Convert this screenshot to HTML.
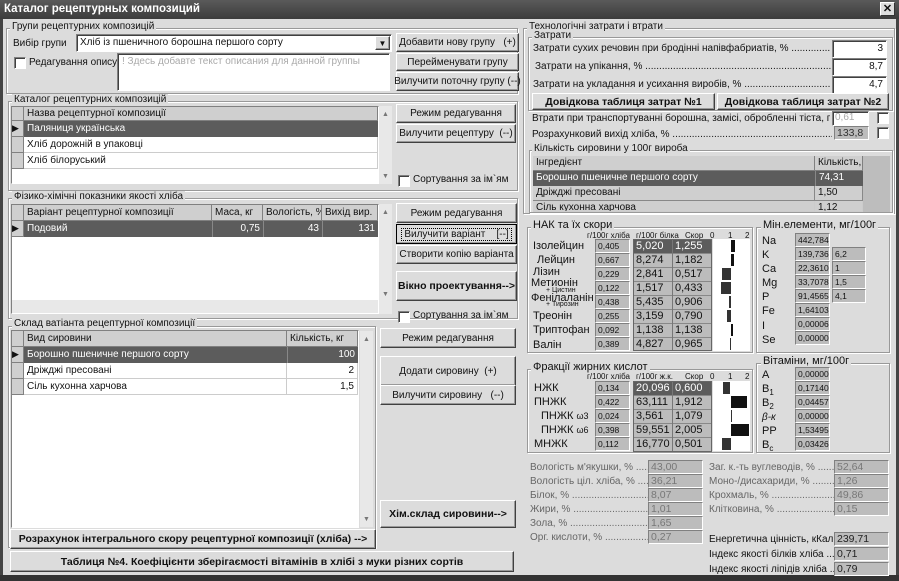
<!DOCTYPE html>
<html><head><meta charset="utf-8"><style>
*{box-sizing:border-box;margin:0;padding:0}
body{width:899px;height:581px;overflow:hidden;background:#dcdcdc;font-family:"Liberation Sans",sans-serif;font-size:10px;color:#111;position:relative}
div{position:absolute}
.t{white-space:nowrap;line-height:13px}
.b{background:#dcdcdc;border:1px solid;border-color:#fff #404040 #404040 #fff;box-shadow:inset -1px -1px 0 #999;text-align:center;white-space:nowrap;display:flex;align-items:center;justify-content:center}
.bold{font-weight:bold;font-size:10.5px}
.g{border:1px solid #999;box-shadow:1px 1px 0 #fff, inset 1px 1px 0 #fff}
.gl{background:#dcdcdc;padding:0 2px;white-space:nowrap;line-height:12px}
.in{background:#fff;border:1px solid;border-color:#808080 #fff #fff #808080;box-shadow:inset 1px 1px 0 #404040;text-align:right;padding-right:3px;line-height:15px}
.o{background:#bcbcbc;border:1px solid;border-color:#808080 #fff #fff #808080;font-size:8.5px;padding-left:2px;line-height:12px;white-space:nowrap}
.o2{background:#bcbcbc;border:1px solid;border-color:#808080 #fff #fff #808080;padding-left:2px;line-height:12px;color:#777;white-space:nowrap;font-size:10.5px}
.cb{width:12px;height:12px;background:#fff;border:1px solid;border-color:#808080 #fff #fff #808080;box-shadow:inset 1px 1px 0 #404040}
.grid{background:#fff;border:1px solid;border-color:#808080 #fff #fff #808080}
.h{background:#cfcfcf;border-right:1px solid #808080;border-bottom:1px solid #808080;line-height:15px;padding-left:3px;white-space:nowrap;overflow:hidden}
.ind{background:#cfcfcf;border-right:1px solid #808080;border-bottom:1px solid #808080}
.sel{background:#5c5c5c;color:#fff;line-height:15px;padding-left:3px;white-space:nowrap}
.r{line-height:15px;padding-left:3px;border-bottom:1px solid #ccc;border-right:1px solid #ccc;white-space:nowrap}
.sb{background:#e8e8e8}
.dots{overflow:hidden;white-space:nowrap}
.n{font-size:11px}
.sh{font-size:8px;white-space:nowrap;line-height:10px}
.ar{font-size:7px;color:#777;line-height:9px}
</style></head><body>
<div style="left:0;top:0;width:899px;height:19px;background:linear-gradient(#5a5a5a,#3c3c3c)"></div>
<div class="t" style="left:4px;top:3px;color:#fff;font-weight:bold;font-size:11.5px">Каталог рецептурных композиций</div>
<div style="left:880px;top:2px;width:15px;height:14px;background:#ddd;border:1px solid #fff;border-right-color:#333;border-bottom-color:#333;font-size:11px;line-height:12px;text-align:center;font-weight:bold">✕</div>
<div style="left:0;top:19px;width:3px;height:562px;background:#444"></div>
<div style="left:896px;top:19px;width:3px;height:562px;background:#444"></div>
<div style="left:0;top:575px;width:899px;height:6px;background:#333"></div>

<div class="g" style="left:6px;top:28px;width:512px;height:66px"></div>
<div class="gl t" style="left:10px;top:21px">Групи рецептурних композицій</div>
<div class="t" style="left:13px;top:37px">Вибір групи</div>
<div class="in" style="left:76px;top:34px;width:316px;height:18px;text-align:left;padding-left:3px">Хліб із пшеничного борошна першого сорту</div>
<div class="b" style="left:375px;top:36px;width:15px;height:14px;font-size:8px">▼</div>
<div class="b" style="left:396px;top:33px;width:123px;height:19px">Добавити нову групу&nbsp;&nbsp;&nbsp;(+)</div>
<div class="b" style="left:396px;top:53px;width:123px;height:18px">Перейменувати групу</div>
<div class="b" style="left:396px;top:72px;width:123px;height:19px">Вилучити поточну групу (--)</div>
<div class="cb" style="left:14px;top:57px"></div>
<div class="t" style="left:29px;top:56px">Редагування опису</div>
<div class="in" style="left:117px;top:53px;width:273px;height:38px;text-align:left;color:#aaa;padding-left:4px">! Здесь добавте текст описания для данной группы</div>

<div class="g" style="left:8px;top:101px;width:510px;height:90px"></div>
<div class="gl t" style="left:12px;top:94px">Каталог рецептурних композицій</div>
<div class="grid" style="left:11px;top:106px;width:368px;height:78px"></div>
<div class="ind" style="left:12px;top:107px;width:12px;height:14px"></div>
<div class="h" style="left:24px;top:107px;width:354px;height:14px;line-height:13px">Назва рецептурної композиції</div>
<div class="ind" style="left:12px;top:121px;width:12px;height:16px;font-size:9px;line-height:15px">▶</div>
<div class="sel" style="left:24px;top:121px;width:354px;height:16px">Паляниця українська</div>
<div class="ind" style="left:12px;top:137px;width:12px;height:16px"></div>
<div class="r" style="left:24px;top:137px;width:354px;height:16px">Хліб дорожній в упаковці</div>
<div class="ind" style="left:12px;top:153px;width:12px;height:16px"></div>
<div class="r" style="left:24px;top:153px;width:354px;height:16px">Хліб білоруський</div>
<div class="sb" style="left:379px;top:106px;width:13px;height:78px"></div>
<div class="ar" style="left:382px;top:110px">▲</div>
<div class="ar" style="left:382px;top:172px">▼</div>
<div class="b" style="left:396px;top:104px;width:120px;height:19px">Режим редагування</div>
<div class="b" style="left:396px;top:124px;width:120px;height:19px">Вилучити рецептуру&nbsp;&nbsp;(--)</div>
<div class="cb" style="left:398px;top:175px"></div>
<div class="t" style="left:413px;top:173px">Сортування за ім`ям</div>

<div class="g" style="left:8px;top:198px;width:510px;height:121px"></div>
<div class="gl t" style="left:12px;top:191px">Фізико-хімічні показники якості хліба</div>
<div class="grid" style="left:11px;top:204px;width:368px;height:110px"></div>
<div class="ind" style="left:12px;top:205px;width:12px;height:16px"></div>
<div class="h" style="left:24px;top:205px;width:188px;height:16px">Варіант рецептурної композиції</div>
<div class="h" style="left:212px;top:205px;width:51px;height:16px">Маса, кг</div>
<div class="h" style="left:263px;top:205px;width:59px;height:16px">Вологість, %</div>
<div class="h" style="left:322px;top:205px;width:56px;height:16px">Вихід вир.</div>
<div class="ind" style="left:12px;top:221px;width:12px;height:16px;font-size:9px;line-height:15px">▶</div>
<div class="sel" style="left:24px;top:221px;width:188px;height:16px">Подовий</div>
<div class="sel" style="left:212px;top:221px;width:51px;height:16px;text-align:right;padding-right:3px;border-left:1px solid #888">0,75</div>
<div class="sel" style="left:263px;top:221px;width:59px;height:16px;text-align:right;padding-right:3px;border-left:1px solid #888">43</div>
<div class="sel" style="left:322px;top:221px;width:56px;height:16px;text-align:right;padding-right:3px;border-left:1px solid #888">131</div>
<div class="sb" style="left:12px;top:300px;width:366px;height:13px"></div>
<div class="sb" style="left:379px;top:204px;width:13px;height:110px"></div>
<div class="ar" style="left:382px;top:208px">▲</div>
<div class="ar" style="left:382px;top:290px">▼</div>
<div class="b" style="left:396px;top:203px;width:121px;height:20px">Режим редагування</div>
<div class="b" style="left:396px;top:224px;width:121px;height:20px;border:1px solid #000"><span style="outline:1px dotted #000;padding:0 2px">Вилучити варіант&nbsp;&nbsp;&nbsp;&nbsp;[--]</span></div>
<div class="b" style="left:396px;top:245px;width:121px;height:19px">Створити копію варіанта</div>
<div class="b bold" style="left:396px;top:271px;width:121px;height:30px">Вікно проектування--&gt;</div>
<div class="cb" style="left:398px;top:311px"></div>
<div class="t" style="left:413px;top:309px">Сортування за ім`ям</div>

<div class="g" style="left:8px;top:326px;width:368px;height:222px"></div>
<div class="gl t" style="left:12px;top:318px">Склад ватіанта рецептурної композиції</div>
<div class="grid" style="left:11px;top:330px;width:348px;height:198px"></div>
<div class="ind" style="left:12px;top:331px;width:12px;height:16px"></div>
<div class="h" style="left:24px;top:331px;width:263px;height:16px">Вид сировини</div>
<div class="h" style="left:287px;top:331px;width:71px;height:16px">Кількість, кг</div>
<div class="ind" style="left:12px;top:347px;width:12px;height:16px;font-size:9px;line-height:15px">▶</div>
<div class="sel" style="left:24px;top:347px;width:263px;height:16px">Борошно пшеничне першого сорту</div>
<div class="sel" style="left:287px;top:347px;width:71px;height:16px;text-align:right;padding-right:3px;border-left:1px solid #888">100</div>
<div class="ind" style="left:12px;top:363px;width:12px;height:16px"></div>
<div class="r" style="left:24px;top:363px;width:263px;height:16px">Дріжджі пресовані</div>
<div class="r" style="left:287px;top:363px;width:71px;height:16px;text-align:right;padding-right:3px">2</div>
<div class="ind" style="left:12px;top:379px;width:12px;height:16px"></div>
<div class="r" style="left:24px;top:379px;width:263px;height:16px">Сіль кухонна харчова</div>
<div class="r" style="left:287px;top:379px;width:71px;height:16px;text-align:right;padding-right:3px">1,5</div>
<div class="sb" style="left:360px;top:331px;width:13px;height:196px"></div>
<div class="ar" style="left:363px;top:335px">▲</div>
<div class="ar" style="left:363px;top:515px">▼</div>
<div class="b" style="left:380px;top:328px;width:136px;height:20px">Режим редагування</div>
<div class="b" style="left:380px;top:356px;width:136px;height:30px">Додати сировину&nbsp;&nbsp;(+)</div>
<div class="b" style="left:380px;top:385px;width:136px;height:20px">Вилучити сировину&nbsp;&nbsp;&nbsp;(--)</div>
<div class="b bold" style="left:380px;top:500px;width:136px;height:28px">Хім.склад сировини--&gt;</div>
<div class="b bold" style="left:10px;top:529px;width:366px;height:20px">Розрахунок інтегрального скору рецептурної композиції (хліба) --&gt;</div>
<div class="b bold" style="left:10px;top:551px;width:504px;height:21px">Таблиця №4. Коефіцієнти зберігаємості вітамінів в хлібі з муки різних сортів</div>

<div class="g" style="left:523px;top:28px;width:372px;height:186px"></div>
<div class="gl t" style="left:527px;top:21px">Технологічні затрати і втрати</div>
<div class="g" style="left:528px;top:37px;width:365px;height:74px"></div>
<div class="gl t" style="left:532px;top:30px">Затрати</div>
<div class="t dots" style="left:533px;top:42px;width:298px">Затрати сухих речовин при бродінні напівфабриатів, % ...........................................................</div>
<div class="in" style="left:832px;top:40px;width:55px;height:18px">3</div>
<div class="t dots" style="left:535px;top:60px;width:296px">Затрати на упікання, % ..........................................................................................................................</div>
<div class="in" style="left:832px;top:58px;width:55px;height:18px">8,7</div>
<div class="t dots" style="left:533px;top:78px;width:298px">Затрати на укладання и усихання виробів, % ..............................................................................</div>
<div class="in" style="left:832px;top:76px;width:55px;height:18px">4,7</div>
<div class="b bold" style="left:532px;top:93px;width:183px;height:17px">Довідкова таблиця затрат №1</div>
<div class="b bold" style="left:717px;top:93px;width:172px;height:17px">Довідкова таблиця затрат №2</div>
<div class="t dots" style="left:532px;top:112px;width:298px">Втрати при транспортуванні борошна, замісі, обробленні тіста, г ...............................</div>
<div class="in" style="left:832px;top:111px;width:37px;height:15px;text-align:left;padding-left:2px;color:#aaa;line-height:12px">0,61</div>
<div class="cb" style="left:877px;top:112px"></div>
<div class="t dots" style="left:532px;top:128px;width:300px">Розрахунковий вихід хліба, % ..............................................................................................................</div>
<div class="o2" style="left:834px;top:126px;width:35px;height:14px;color:#333">133,8</div>
<div class="cb" style="left:877px;top:127px"></div>

<div class="g" style="left:529px;top:150px;width:364px;height:63px"></div>
<div class="gl t" style="left:532px;top:143px">Кількість сировини у 100г вироба</div>
<div style="left:533px;top:156px;width:357px;height:56px;background:#bdbdbd"></div>
<div class="h" style="left:533px;top:156px;width:282px;height:15px;line-height:14px">Інгредієнт</div>
<div class="h" style="left:815px;top:156px;width:48px;height:15px;line-height:14px">Кількість, г</div>
<div class="sel" style="left:533px;top:171px;width:282px;height:15px;line-height:14px">Борошно пшеничне першого сорту</div>
<div class="sel" style="left:815px;top:171px;width:48px;height:15px;line-height:14px;border-left:1px solid #888">74,31</div>
<div class="r" style="left:533px;top:186px;width:282px;height:15px;line-height:14px;background:#cfcfcf;border-color:#888">Дріжджі пресовані</div>
<div class="r" style="left:815px;top:186px;width:48px;height:15px;line-height:14px;background:#cfcfcf;border-color:#888">1,50</div>
<div class="r" style="left:533px;top:201px;width:282px;height:11px;line-height:14px;background:#cfcfcf;overflow:hidden">Сіль кухонна харчова</div>
<div class="r" style="left:815px;top:201px;width:48px;height:11px;line-height:14px;background:#cfcfcf;overflow:hidden">1,12</div>

<div class="g" style="left:527px;top:227px;width:226px;height:126px"></div>
<div class="gl t" style="left:531px;top:219px;font-size:11px">НАК та їх скори</div>
<div class="sh" style="left:587px;top:231px">г/100г хліба</div>
<div class="sh" style="left:636px;top:231px">г/100г білка</div>
<div class="sh" style="left:685px;top:231px">Скор</div>
<div class="sh" style="left:710px;top:231px">0</div>
<div class="sh" style="left:728px;top:231px">1</div>
<div class="sh" style="left:745px;top:231px">2</div>
<div style="left:633px;top:239px;width:79px;height:112px;border:1px solid #666;background:repeating-linear-gradient(#bcbcbc 0 13px,#888 13px 14px)"></div>
<div style="left:634px;top:240px;width:77px;height:13px;background:#5c5c5c"></div>
<div style="left:672px;top:240px;width:1px;height:110px;background:#777"></div>
<div style="left:713px;top:239px;width:37px;height:112px;background:#fff"></div>

<div class="t n" style="left:533px;top:240px">Ізолейцин</div>
<div class="t n" style="left:537px;top:254px">Лейцин</div>
<div class="t n" style="left:533px;top:266px">Лізин</div>
<div class="t n" style="left:531px;top:277px">Метионін</div>
<div class="t" style="left:546px;top:286px;font-size:7px;line-height:9px">+ Цистин</div>
<div class="t n" style="left:531px;top:292px">Фенілаланін</div>
<div class="t" style="left:546px;top:300px;font-size:7px;line-height:9px">+ Тирозин</div>
<div class="t n" style="left:533px;top:310px">Треонін</div>
<div class="t n" style="left:533px;top:324px">Триптофан</div>
<div class="t n" style="left:533px;top:339px">Валін</div>

<div class="o" style="left:595px;top:239px;width:35px;height:14px">0,405</div>
<div class="o" style="left:595px;top:253px;width:35px;height:14px">0,667</div>
<div class="o" style="left:595px;top:267px;width:35px;height:14px">0,229</div>
<div class="o" style="left:595px;top:281px;width:35px;height:14px">0,122</div>
<div class="o" style="left:595px;top:295px;width:35px;height:14px">0,438</div>
<div class="o" style="left:595px;top:309px;width:35px;height:14px">0,255</div>
<div class="o" style="left:595px;top:323px;width:35px;height:14px">0,092</div>
<div class="o" style="left:595px;top:337px;width:35px;height:14px">0,389</div>

<div class="t n" style="left:636px;top:240px;color:#fff">5,020</div><div class="t n" style="left:675px;top:240px;color:#fff">1,255</div>
<div class="t n" style="left:636px;top:254px">8,274</div><div class="t n" style="left:675px;top:254px">1,182</div>
<div class="t n" style="left:636px;top:268px">2,841</div><div class="t n" style="left:675px;top:268px">0,517</div>
<div class="t n" style="left:636px;top:282px">1,517</div><div class="t n" style="left:675px;top:282px">0,433</div>
<div class="t n" style="left:636px;top:296px">5,435</div><div class="t n" style="left:675px;top:296px">0,906</div>
<div class="t n" style="left:636px;top:310px">3,159</div><div class="t n" style="left:675px;top:310px">0,790</div>
<div class="t n" style="left:636px;top:324px">1,138</div><div class="t n" style="left:675px;top:324px">1,138</div>
<div class="t n" style="left:636px;top:338px">4,827</div><div class="t n" style="left:675px;top:338px">0,965</div>
<div style="left:731px;top:240px;width:4px;height:12px;background:#111"></div>
<div style="left:731px;top:254px;width:3px;height:12px;background:#111"></div>
<div style="left:722px;top:268px;width:9px;height:12px;background:#333"></div>
<div style="left:721px;top:282px;width:10px;height:12px;background:#333"></div>
<div style="left:729px;top:296px;width:2px;height:12px;background:#333"></div>
<div style="left:727px;top:310px;width:4px;height:12px;background:#333"></div>
<div style="left:731px;top:324px;width:2px;height:12px;background:#111"></div>
<div style="left:730px;top:338px;width:1px;height:12px;background:#333"></div>

<div class="g" style="left:756px;top:227px;width:134px;height:126px"></div>
<div class="gl t" style="left:761px;top:219px;font-size:11px">Мін.елементи, мг/100г</div>
<div class="t n" style="left:762px;top:235px">Na</div>
<div class="t n" style="left:762px;top:249px">K</div>
<div class="t n" style="left:762px;top:263px">Ca</div>
<div class="t n" style="left:762px;top:277px">Mg</div>
<div class="t n" style="left:762px;top:291px">P</div>
<div class="t n" style="left:762px;top:305px">Fe</div>
<div class="t n" style="left:762px;top:320px">I</div>
<div class="t n" style="left:762px;top:334px">Se</div>
<div class="o" style="left:795px;top:233px;width:35px;height:14px">442,784</div>
<div class="o" style="left:795px;top:247px;width:35px;height:14px">139,736</div>
<div class="o" style="left:795px;top:261px;width:35px;height:14px">22,3610</div>
<div class="o" style="left:795px;top:275px;width:35px;height:14px">33,7078</div>
<div class="o" style="left:795px;top:289px;width:35px;height:14px">91,4565</div>
<div class="o" style="left:795px;top:303px;width:35px;height:14px">1,64103</div>
<div class="o" style="left:795px;top:317px;width:35px;height:14px">0,00006</div>
<div class="o" style="left:795px;top:331px;width:35px;height:14px">0,00000</div>
<div class="o" style="left:832px;top:247px;width:34px;height:14px">6,2</div>
<div class="o" style="left:832px;top:261px;width:34px;height:14px">1</div>
<div class="o" style="left:832px;top:275px;width:34px;height:14px">1,5</div>
<div class="o" style="left:832px;top:289px;width:34px;height:14px">4,1</div>

<div class="g" style="left:527px;top:369px;width:226px;height:84px"></div>
<div class="gl t" style="left:531px;top:361px;font-size:11px">Фракції жирних кислот</div>
<div class="sh" style="left:587px;top:372px">г/100г хліба</div>
<div class="sh" style="left:636px;top:372px">г/100г ж.к.</div>
<div class="sh" style="left:685px;top:372px">Скор</div>
<div class="sh" style="left:710px;top:372px">0</div>
<div class="sh" style="left:728px;top:372px">1</div>
<div class="sh" style="left:745px;top:372px">2</div>
<div style="left:633px;top:381px;width:79px;height:71px;border:1px solid #666;background:repeating-linear-gradient(#bcbcbc 0 13px,#888 13px 14px)"></div>
<div style="left:634px;top:382px;width:77px;height:13px;background:#5c5c5c"></div>
<div style="left:672px;top:382px;width:1px;height:69px;background:#777"></div>
<div style="left:713px;top:381px;width:37px;height:70px;background:#fff"></div>
<div class="t n" style="left:534px;top:382px">НЖК</div>
<div class="t n" style="left:534px;top:396px">ПНЖК</div>
<div class="t n" style="left:541px;top:410px">ПНЖК <span style="font-size:9px">ω3</span></div>
<div class="t n" style="left:541px;top:424px">ПНЖК <span style="font-size:9px">ω6</span></div>
<div class="t n" style="left:534px;top:438px">МНЖК</div>
<div class="o" style="left:595px;top:381px;width:35px;height:14px">0,134</div>
<div class="o" style="left:595px;top:395px;width:35px;height:14px">0,422</div>
<div class="o" style="left:595px;top:409px;width:35px;height:14px">0,024</div>
<div class="o" style="left:595px;top:423px;width:35px;height:14px">0,398</div>
<div class="o" style="left:595px;top:437px;width:35px;height:14px">0,112</div>
<div class="t n" style="left:636px;top:382px;color:#fff">20,096</div><div class="t n" style="left:675px;top:382px;color:#fff">0,600</div>
<div class="t n" style="left:636px;top:396px">63,111</div><div class="t n" style="left:675px;top:396px">1,912</div>
<div class="t n" style="left:636px;top:410px">3,561</div><div class="t n" style="left:675px;top:410px">1,079</div>
<div class="t n" style="left:636px;top:424px">59,551</div><div class="t n" style="left:675px;top:424px">2,005</div>
<div class="t n" style="left:636px;top:438px">16,770</div><div class="t n" style="left:675px;top:438px">0,501</div>
<div style="left:723px;top:382px;width:7px;height:12px;background:#333"></div>
<div style="left:731px;top:396px;width:16px;height:12px;background:#111"></div>
<div style="left:731px;top:410px;width:1px;height:12px;background:#333"></div>
<div style="left:731px;top:424px;width:18px;height:12px;background:#111"></div>
<div style="left:722px;top:438px;width:9px;height:12px;background:#333"></div>

<div class="g" style="left:756px;top:363px;width:134px;height:90px"></div>
<div class="gl t" style="left:761px;top:355px;font-size:11px">Вітаміни, мг/100г</div>
<div class="t n" style="left:762px;top:369px">A</div>
<div class="t n" style="left:762px;top:383px">B<sub style="font-size:8px">1</sub></div>
<div class="t n" style="left:762px;top:397px">B<sub style="font-size:8px">2</sub></div>
<div class="t" style="left:762px;top:411px;font-size:10px;font-style:italic">β-к</div>
<div class="t n" style="left:762px;top:425px">PP</div>
<div class="t n" style="left:762px;top:439px">B<sub style="font-size:8px">c</sub></div>
<div class="o" style="left:795px;top:367px;width:35px;height:14px">0,00000</div>
<div class="o" style="left:795px;top:381px;width:35px;height:14px">0,17140</div>
<div class="o" style="left:795px;top:395px;width:35px;height:14px">0,04457</div>
<div class="o" style="left:795px;top:409px;width:35px;height:14px">0,00000</div>
<div class="o" style="left:795px;top:423px;width:35px;height:14px">1,53495</div>
<div class="o" style="left:795px;top:437px;width:35px;height:14px">0,03426</div>

<div class="t dots" style="left:530px;top:461px;width:118px;color:#666">Вологість м'якушки, % ..............</div>
<div class="t dots" style="left:530px;top:475px;width:118px;color:#666">Вологість ціл. хліба, % ..............</div>
<div class="t dots" style="left:530px;top:489px;width:118px;color:#666">Білок, % ..............................................</div>
<div class="t dots" style="left:530px;top:503px;width:118px;color:#666">Жири, % ..............................................</div>
<div class="t dots" style="left:530px;top:517px;width:118px;color:#666">Зола, % ..............................................</div>
<div class="t dots" style="left:530px;top:531px;width:118px;color:#666">Орг. кислоти, % ...............................</div>
<div class="o2" style="left:648px;top:460px;width:55px;height:14px">43,00</div>
<div class="o2" style="left:648px;top:474px;width:55px;height:14px">36,21</div>
<div class="o2" style="left:648px;top:488px;width:55px;height:14px">8,07</div>
<div class="o2" style="left:648px;top:502px;width:55px;height:14px">1,01</div>
<div class="o2" style="left:648px;top:516px;width:55px;height:14px">1,65</div>
<div class="o2" style="left:648px;top:530px;width:55px;height:14px">0,27</div>
<div class="t dots" style="left:709px;top:461px;width:125px;color:#666">Заг. к.-ть вуглеводів, % ...............</div>
<div class="t dots" style="left:709px;top:475px;width:125px;color:#666">Моно-/дисахариди, % ...................</div>
<div class="t dots" style="left:709px;top:489px;width:125px;color:#666">Крохмаль, % ...........................................</div>
<div class="t dots" style="left:709px;top:503px;width:125px;color:#666">Клітковина, % .........................................</div>
<div class="o2" style="left:834px;top:460px;width:55px;height:14px">52,64</div>
<div class="o2" style="left:834px;top:474px;width:55px;height:14px">1,26</div>
<div class="o2" style="left:834px;top:488px;width:55px;height:14px">49,86</div>
<div class="o2" style="left:834px;top:502px;width:55px;height:14px">0,15</div>
<div class="t dots" style="left:709px;top:533px;width:125px">Енергетична цінність, кКал ........</div>
<div class="t dots" style="left:709px;top:548px;width:125px">Індекс якості білків хліба ..............</div>
<div class="t dots" style="left:709px;top:563px;width:125px">Індекс якості ліпідів хліба ..............</div>
<div class="o2" style="left:834px;top:532px;width:55px;height:14px;color:#222">239,71</div>
<div class="o2" style="left:834px;top:547px;width:55px;height:14px;color:#222">0,71</div>
<div class="o2" style="left:834px;top:562px;width:55px;height:14px;color:#222">0,79</div>
</body></html>
